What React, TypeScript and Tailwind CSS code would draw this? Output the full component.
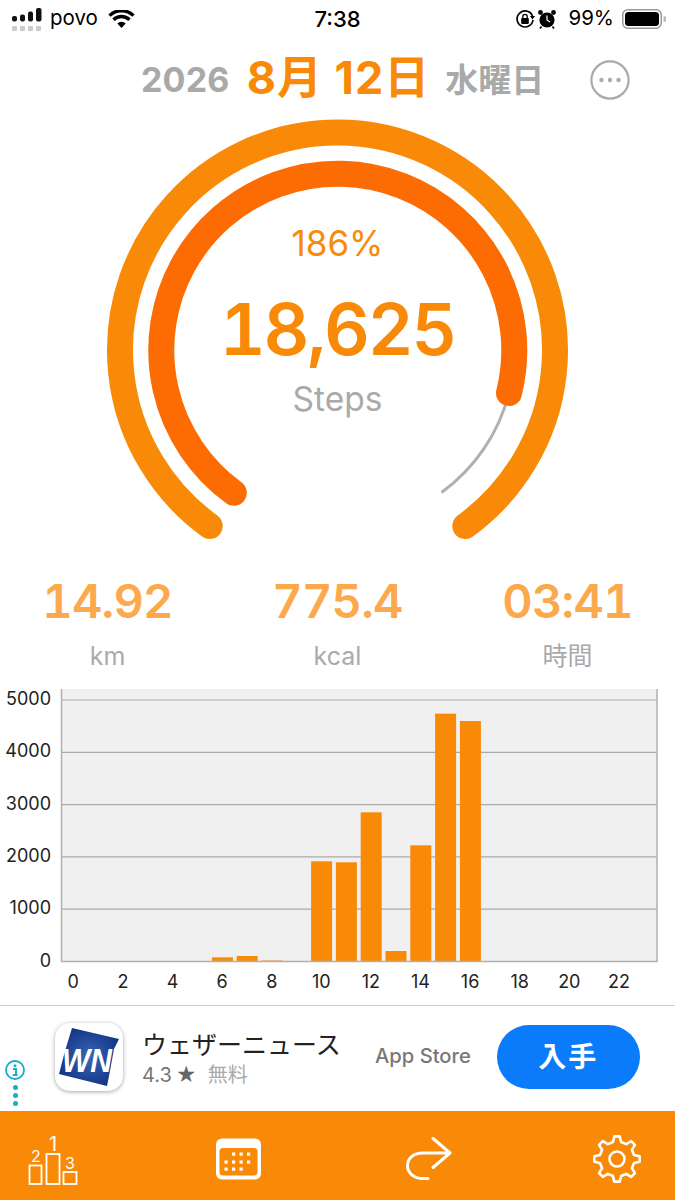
import React from 'react';

const sans = { fontFamily: 'Inter, "Noto Sans CJK JP", sans-serif' };

const bars = [
  { hour: 6, top: 957.3 },
  { hour: 7, top: 956 },
  { hour: 8, top: 960.5 },
  { hour: 10, top: 861.3 },
  { hour: 11, top: 862.3 },
  { hour: 12, top: 812.3 },
  { hour: 13, top: 951 },
  { hour: 14, top: 845.3 },
  { hour: 15, top: 713.7 },
  { hour: 16, top: 721 },
];

const gearPath = () => {
  const cx = 24;
  const cy = 24;
  const teeth = 8;
  const pts: string[] = [];
  for (let i = 0; i < teeth; i++) {
    const a = (i * Math.PI * 2) / teeth - Math.PI / 2;
    const step = (Math.PI * 2) / teeth;
    const list = [
      [17.5, a - step * 0.3],
      [22.8, a - step * 0.15],
      [22.8, a + step * 0.15],
      [17.5, a + step * 0.3],
    ];
    list.forEach(([r, t]) => {
      pts.push(`${(cx + r * Math.cos(t)).toFixed(2)} ${(cy + r * Math.sin(t)).toFixed(2)}`);
    });
  }
  return 'M' + pts.join('L') + 'Z';
};

const StatusBar = () => (
  <div className="grid h-[37px] shrink-0 grid-cols-3 items-center text-[20.5px] leading-none text-black">
    <div className="flex items-center pl-3">
      <svg width="30" height="24" viewBox="0 0 30 24" className="mt-[2px]">
        <rect x="0" y="8" width="5" height="5.5" rx="2" fill="#111" />
        <rect x="8" y="6.5" width="5" height="7" rx="2" fill="#111" />
        <rect x="16" y="3.5" width="5" height="10" rx="2" fill="#111" />
        <rect x="24" y="0" width="5.5" height="13.5" rx="2" fill="#111" />
        <rect x="0" y="18" width="5" height="5" rx="1" fill="#ccc" />
        <rect x="8" y="18" width="5" height="5" rx="1" fill="#ccc" />
        <rect x="16" y="18" width="5" height="5" rx="1" fill="#ccc" />
        <rect x="24" y="18" width="5" height="5" rx="1" fill="#ccc" />
      </svg>
      <span className="ml-2">povo</span>
      <svg width="27" height="18" viewBox="0 0 27 18" className="ml-[10px]">
        <path d="M13.5 18 L9.3 13.4 A6 6 0 0 1 17.7 13.4 Z" fill="#000" />
        <path d="M5.5 9.8 A11.5 11.5 0 0 1 21.5 9.8" fill="none" stroke="#000" strokeWidth="3.4" />
        <path d="M1.5 5.6 A17.2 17.2 0 0 1 25.5 5.6" fill="none" stroke="#000" strokeWidth="3.4" />
      </svg>
    </div>
    <div className="text-center text-[22px] font-medium">7:38</div>
    <div className="flex items-center justify-end pr-[9px]">
      <svg width="20" height="20" viewBox="0 0 20 20">
        <path d="M17.5 7 A8 8 0 1 0 18 11" fill="none" stroke="#000" strokeWidth="1.7" />
        <path d="M15 7 L20 7 L17.5 10.5 Z" fill="#000" />
        <rect x="6.2" y="9" width="7.6" height="6" rx="1" fill="#000" />
        <path d="M7.8 9 V7.5 A2.2 2.2 0 0 1 12.2 7.5 V9" fill="none" stroke="#000" strokeWidth="1.3" />
      </svg>
      <svg width="20" height="20" viewBox="0 0 20 20" className="ml-[2px]">
        <circle cx="10" cy="11" r="7.6" fill="#000" />
        <circle cx="3.5" cy="3.5" r="2.4" fill="#000" />
        <circle cx="16.5" cy="3.5" r="2.4" fill="#000" />
        <path d="M10 6.5 V11 L13 13" fill="none" stroke="#fff" strokeWidth="1.2" />
        <path d="M4.5 17.5 L3 19.5 M15.5 17.5 L17 19.5" stroke="#000" strokeWidth="1.6" />
      </svg>
      <span className="ml-[11px]">99%</span>
      <svg width="44" height="20" viewBox="0 0 44 20" className="ml-[8px]">
        <rect x="0.75" y="0.75" width="38.5" height="18.5" rx="5" fill="none" stroke="#999" strokeWidth="1.5" />
        <rect x="3" y="3" width="34" height="14" rx="3.5" fill="#000" />
        <path d="M41.5 7 A3 3 0 0 1 41.5 13 Z" fill="#bbb" />
      </svg>
    </div>
  </div>
);

const DateHeader = () => (
  <div className="flex h-[73px] shrink-0 items-center pl-[141px] pt-[13px]" style={sans}>
    <span className="text-[34px] font-bold leading-none tracking-[0.2px] text-[#a9a9a9]">2026</span>
    <span className="ml-[17px] mt-[-5px] text-[45px] font-bold leading-none tracking-[1px] text-[#f98a08]">
      8月 12日
    </span>
    <span className="ml-[15px] text-[33px] font-bold leading-none text-[#a9a9a9]">水曜日</span>
    <svg width="40" height="40" viewBox="0 0 40 40" className="ml-[46px]">
      <circle cx="20" cy="20" r="18.6" fill="none" stroke="#aaa" strokeWidth="2.2" />
      <circle cx="11.5" cy="20" r="2.2" fill="#aaa" />
      <circle cx="20" cy="20" r="2.2" fill="#aaa" />
      <circle cx="28.5" cy="20" r="2.2" fill="#aaa" />
    </svg>
  </div>
);

const Gauge = () => (
  <div className="relative h-[450px] shrink-0" style={sans}>
    <svg width="675" height="450" viewBox="0 0 675 450" className="block">
      <path
        d="M209.7 416 A217.5 217.5 0 1 1 465.3 416"
        fill="none"
        stroke="#f98a08"
        strokeWidth="26"
        strokeLinecap="round"
      />
      <path
        d="M509 283 A176.5 176.5 0 0 1 441.5 382.5"
        fill="none"
        stroke="#b0b0b0"
        strokeWidth="3"
      />
      <path
        d="M233.8 382.8 A176.5 176.5 0 1 1 509 283"
        fill="none"
        stroke="#fd6c02"
        strokeWidth="26"
        strokeLinecap="round"
      />
    </svg>
    <div className="absolute left-0 right-0 top-[114px] flex flex-col items-center">
      <div className="text-[35px] leading-[38px] text-[#f98a08]">186%</div>
      <div className="mt-[27px] text-[71px] font-semibold leading-[80px] tracking-[-2.2px] tabular-nums text-[#f98a08]">
        18,625
      </div>
      <div className="mt-[10px] text-[33.5px] leading-[40px] text-[#aaaaaa]">Steps</div>
    </div>
  </div>
);

const Stat = ({ value, label }: { value: string; label: string }) => (
  <div className="flex flex-col items-center">
    <div className="text-[47px] font-semibold leading-[56px] tracking-[-0.8px] tabular-nums text-[#fba94c]">{value}</div>
    <div className="mt-[12px] text-[25px] leading-[30px] text-[#aaaaaa]">{label}</div>
  </div>
);

const Stats = () => (
  <div
    className="grid h-[129px] shrink-0 grid-cols-[230px_230px_230px] justify-center pt-[13px]"
    style={sans}
  >
    <Stat value="14.92" label="km" />
    <Stat value="775.4" label="kcal" />
    <Stat value="03:41" label="時間" />
  </div>
);

const Chart = () => {
  const off = 689;
  const bottom = 961.5 - off;
  const yLabels = [5000, 4000, 3000, 2000, 1000, 0];
  return (
    <div className="h-[316px] shrink-0" style={sans}>
      <svg width="675" height="316" viewBox="0 0 675 316" className="block">
        <rect x="61" y="0" width="596" height={bottom} fill="#f0f0f0" />
        {yLabels.map((v, i) => {
          const y = 700 - off + i * 52.3;
          return (
            <g key={v}>
              {v > 0 && <line x1="61" x2="657" y1={y} y2={y} stroke="#aaaaaa" strokeWidth="1.2" />}
              <text x="51" y={y + 5} textAnchor="end" fontSize="18" fill="#222">
                {v}
              </text>
            </g>
          );
        })}
        {bars.map((b) => (
          <rect
            key={b.hour}
            x={73.6 + 24.8 * b.hour - 10.5}
            y={b.top - off}
            width="21"
            height={961.5 - b.top}
            fill="#f98a08"
          />
        ))}
        <line x1="61.5" x2="61.5" y1="0" y2={bottom} stroke="#b0b0b0" strokeWidth="1.5" />
        <line x1="657" x2="657" y1="0" y2={bottom} stroke="#b0b0b0" strokeWidth="1.5" />
        <line x1="61" x2="657.7" y1={bottom} y2={bottom} stroke="#b0b0b0" strokeWidth="1.5" />
        {[0, 2, 4, 6, 8, 10, 12, 14, 16, 18, 20, 22].map((h) => (
          <text key={h} x={73.3 + 24.8 * h} y="299" textAnchor="middle" fontSize="18" fill="#222">
            {h}
          </text>
        ))}
      </svg>
    </div>
  );
};

const AdBanner = () => (
  <div className="relative flex h-[106px] shrink-0 items-center border-t-[1.5px] border-[#cccccc] pb-[4px] pl-[55px]" style={sans}>
    <div className="absolute left-[5px] top-[54px] flex w-5 flex-col items-center">
      <svg width="20" height="20" viewBox="0 0 20 20">
        <circle cx="10" cy="10" r="9" fill="none" stroke="#17aecb" strokeWidth="1.8" />
        <circle cx="10" cy="5.8" r="1.5" fill="#17aecb" />
        <path d="M8 9 H11 V14.5 M7.8 15 H12.5" fill="none" stroke="#17aecb" strokeWidth="2" />
      </svg>
      <div className="mt-[5px] flex flex-col gap-[3px]">
        <div className="h-[5px] w-[5px] rounded-full bg-[#17aecb]" />
        <div className="h-[5px] w-[5px] rounded-full bg-[#17aecb]" />
        <div className="h-[5px] w-[5px] rounded-full bg-[#17aecb]" />
      </div>
    </div>
    <div className="h-[68px] w-[68px] shrink-0 overflow-hidden rounded-[15px] bg-white shadow-[0_1px_4px_rgba(0,0,0,0.35)]">
      <svg width="68" height="68" viewBox="0 0 68 68">
        <defs>
          <radialGradient id="wn" cx="50%" cy="50%" r="60%">
            <stop offset="0%" stopColor="#3a66b8" />
            <stop offset="100%" stopColor="#10307f" />
          </radialGradient>
        </defs>
        <path d="M17 5 L64 16 L59 26 L55 48 L52 63 L4 51 L10 28 Z" fill="url(#wn)" />
        <text
          x="7"
          y="43.7"
          fontSize="30"
          fontWeight="700"
          fontStyle="italic"
          fill="#ffffff"
          transform="scale(1 1.12)"
          style={{ fontFamily: '"Liberation Sans", sans-serif' }}
        >
          WN
        </text>
      </svg>
    </div>
    <div className="ml-[19px] mt-[4px] flex w-[233px] flex-col">
      <div className="text-[25px] leading-[30px] text-[#222]">ウェザーニュース</div>
      <div className="mt-[3px] flex items-center text-[20px] leading-[24px] text-[#777]">
        <span>4.3</span>
        <span className="ml-[4px] text-[#666]">★</span>
        <span className="ml-[11px] text-[#aaa]">無料</span>
      </div>
    </div>
    <div className="text-[20.2px] font-medium text-[#777]">App Store</div>
    <div className="ml-[26px] flex h-[64px] w-[143px] items-center justify-center rounded-full bg-[#0a7bfa] text-[28px] font-bold tracking-[2px] text-white">
      入手
    </div>
  </div>
);

const TabBar = () => (
  <div className="flex h-[89px] shrink-0 items-center bg-[#f98a08] pl-[27px] pt-[6px]" style={sans}>
    <svg width="52" height="60" viewBox="0 0 52 60">
      <g fill="none" stroke="#fff" strokeWidth="1.8">
        <rect x="2.5" y="36.5" width="12" height="18.5" />
        <rect x="19.5" y="25" width="13" height="30" />
        <rect x="36.5" y="43" width="13" height="12" />
      </g>
      <text x="9" y="32.5" textAnchor="middle" fontSize="16" fill="#fff">2</text>
      <text x="26" y="21.5" textAnchor="middle" fontSize="20" fill="#fff">1</text>
      <text x="43" y="39.5" textAnchor="middle" fontSize="16" fill="#fff">3</text>
    </svg>
    <svg width="46" height="42" viewBox="0 0 46 42" className="ml-[137px]">
      <rect x="0" y="0.5" width="45" height="41" rx="6" fill="#fff" />
      <rect x="3.5" y="10" width="38" height="27.5" rx="3.5" fill="#f98a08" />
      {[
        [17.5, 16], [25, 16], [32.5, 16],
        [10, 24], [17.5, 24], [25, 24], [32.5, 24],
        [10, 31], [17.5, 31], [25, 31],
      ].map(([x, y]) => (
        <rect key={`${x}-${y}`} x={x - 1.5} y={y - 1.5} width="3.2" height="3.2" fill="#fff" />
      ))}
    </svg>
    <svg width="46" height="44" viewBox="0 0 46 44" className="ml-[144px]">
      <path
        d="M27 1.5 L44 16 L27 30.5 M44 16 H17 C8 16 1.5 21 1.5 28.5 C1.5 36 8 41.5 17 41.5 H22"
        fill="none"
        stroke="#fff"
        strokeWidth="3"
        strokeLinecap="round"
        strokeLinejoin="round"
      />
    </svg>
    <svg width="48" height="48" viewBox="0 0 48 48" className="ml-[141px]">
      <path d={gearPath()} fill="none" stroke="#fff" strokeWidth="2.6" strokeLinejoin="round" />
      <circle cx="24" cy="24" r="7.5" fill="none" stroke="#fff" strokeWidth="2.6" />
    </svg>
  </div>
);

export default function App() {
  return (
    <div className="flex h-[1200px] w-[675px] flex-col overflow-hidden bg-white" style={sans}>
      <StatusBar />
      <DateHeader />
      <Gauge />
      <Stats />
      <Chart />
      <AdBanner />
      <TabBar />
    </div>
  );
}
